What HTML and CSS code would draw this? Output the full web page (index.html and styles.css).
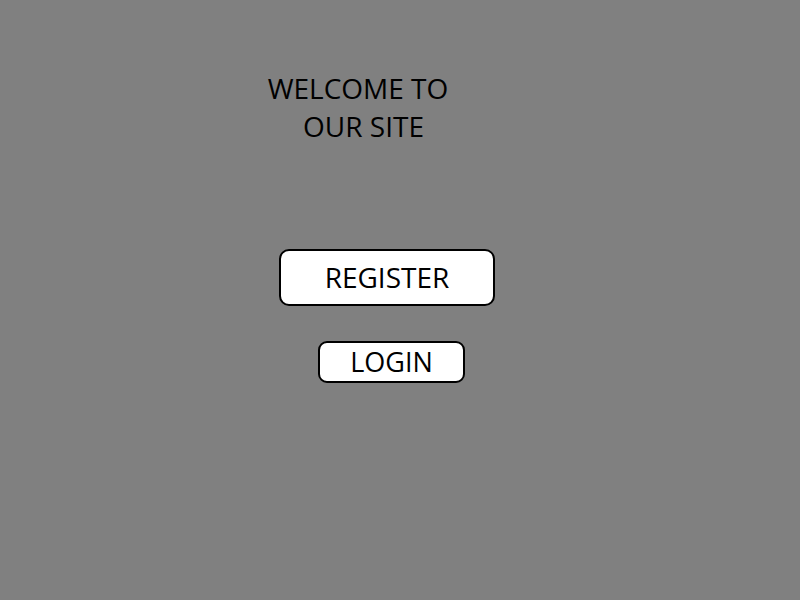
FILE: index.html
```html
<!DOCTYPE html>
<html>
<head>
<meta charset="utf-8">
<link rel="stylesheet" href="styles.css">
</head>
<body>
<main class="page">
  <h1 class="title"><span class="line">WELCOME TO</span><span class="line line-second">OUR SITE</span></h1>
  <button class="btn btn-register">REGISTER</button>
  <button class="btn btn-login">LOGIN</button>
</main>
</body>
</html>
```
FILE: styles.css
```css
html, body {
  margin: 0;
  padding: 0;
  background: #808080;
  height: 100%;
}
.page {
  display: flex;
  flex-direction: column;
  align-items: flex-start;
  padding-top: 69px;
  font-family: "Open Sans", "Noto Sans", sans-serif;
}
.title {
  margin: 0 0 0 258px;
  width: 200px;
  text-align: center;
  font-weight: 400;
  font-size: 28px;
  line-height: 38px;
  color: #000;
}
.line {
  display: block;
}
.line-second {
  padding-left: 11px;
}
.btn {
  font-family: "Open Sans", "Noto Sans", sans-serif;
  background: #fff;
  color: #000;
  border: 2px solid #000;
  border-radius: 10px;
  font-size: 28px;
  padding: 0 0 2px 0;
  display: flex;
  align-items: center;
  justify-content: center;
  box-sizing: border-box;
}
.btn-register {
  margin: 104px 0 0 279px;
  width: 216px;
  height: 57px;
}
.btn-login {
  margin: 35px 0 0 318px;
  width: 147px;
  height: 42px;
  border-radius: 9px;
  font-size: 27px;
}
```
